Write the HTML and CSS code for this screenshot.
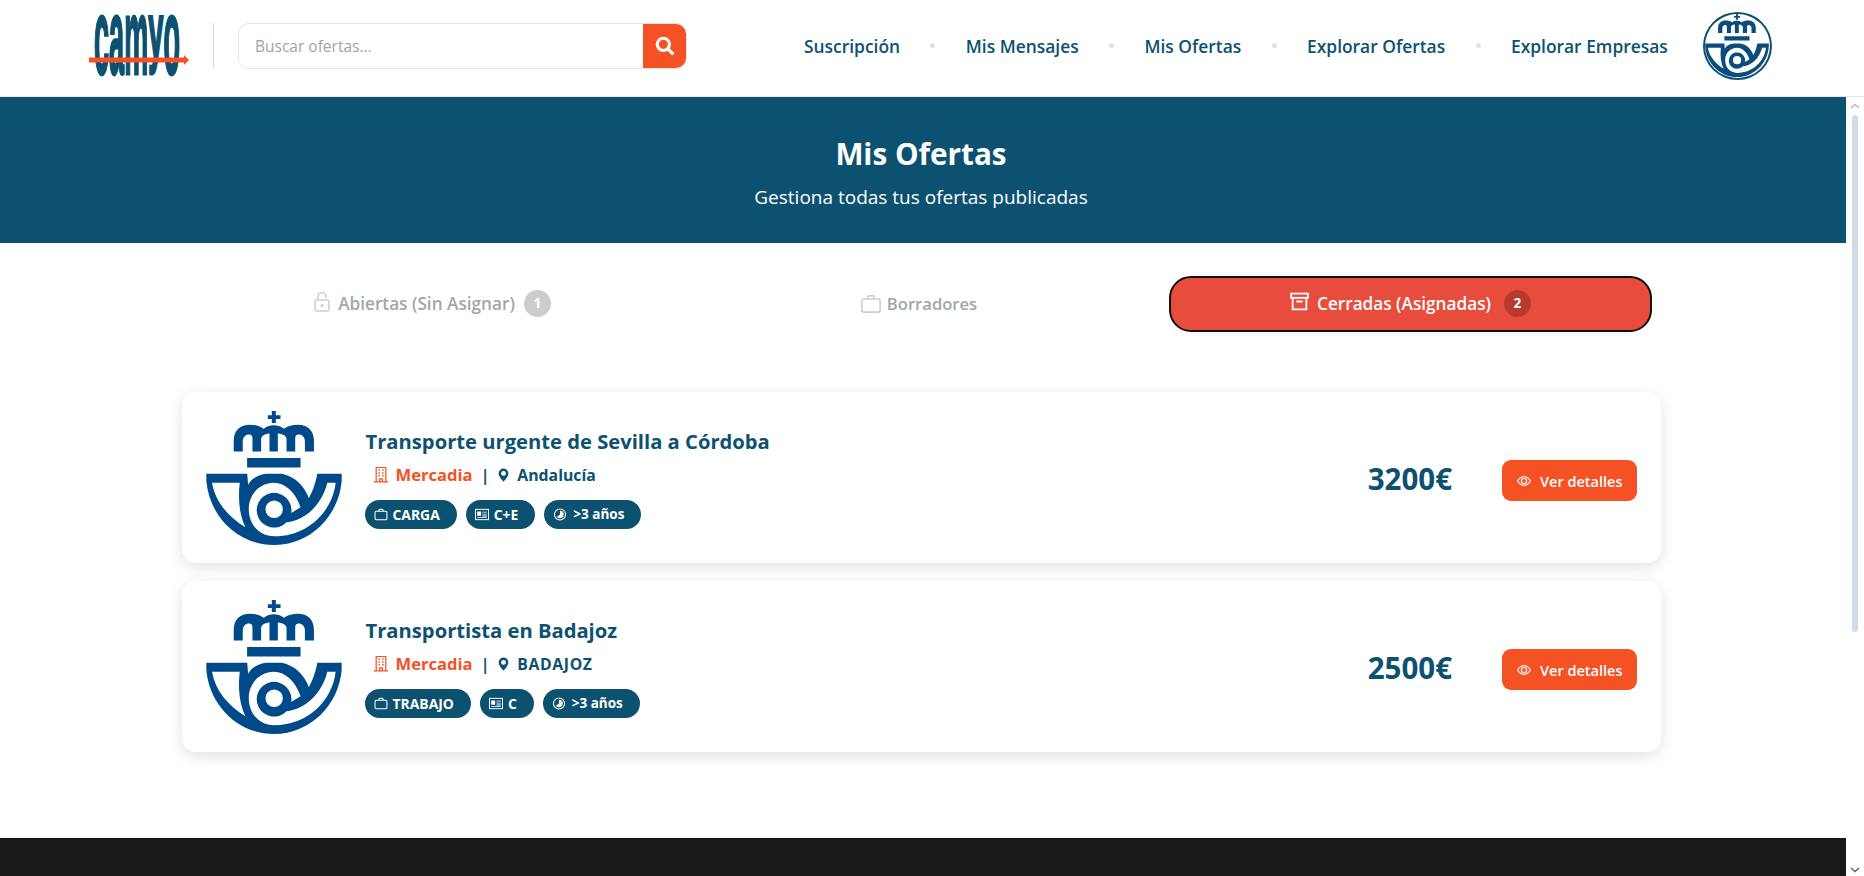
FILE: index.html
```html
<!DOCTYPE html>
<html lang="es">
<head>
    <meta charset="UTF-8">
    <meta name="viewport" content="width=device-width, initial-scale=1.0">
    <title>Mis Ofertas - Camyo</title>
    <link rel="stylesheet" href="styles.css">
</head>
<body>
    <!-- Icon sprite -->
    <svg class="sprite" xmlns="http://www.w3.org/2000/svg">
        <symbol id="logo-correos" viewBox="18 17 405 401">
            <path d="M214 17h12v13h14v11h-14v12h-12V41h-12V30h12z"/>
            <path d="M100 138V105C100 75 120 58 148 58C165 58 178 62 190 70C200 63 210 60 220 60C230 60 240 63 250 70C262 62 275 58 292 58C320 58 340 75 340 105V138z"/>
            <path class="cut" d="M127 140V108C127 95 135 87 146 87C152 87 156 90 156 98V140zM182 140V102C182 92 190 86 207 84V140zM232 140V84C250 86 258 92 258 102V140zM284 140V98C284 90 288 87 294 87C305 87 313 95 313 108V140z"/>
            <path d="M140 158h160v28H140z"/>
            <path d="M18 205H423V225C415 330 330 418 220 418C110 418 26 330 18 225z"/>
            <path class="cut" d="M35 232H118C112 285 118 330 135 365C85 335 45 290 35 232z"/>
            <path class="cut" d="M140 200H195V205C170 210 152 220 143 238z"/>
            <path class="cut" d="M245 200H350V205C345 235 335 258 325 278C310 240 285 215 245 205z"/>
            <path class="cut" d="M405 232C395 320 320 392 222 392C175 392 145 355 145 310C145 265 180 232 220 232C255 232 285 262 300 305L272 322A52 52 0 1 0 258 350C315 345 365 295 380 232z"/>
            <circle class="cut" cx="221" cy="311" r="26"/>
        </symbol>
        <symbol id="ic-lock" viewBox="0 0 16 20">
            <rect x="1" y="8" width="14" height="11" rx="1.5" fill="none" stroke="currentColor" stroke-width="1.6"/>
            <path d="M4 8V4.5a4 4 0 0 1 8 0V6" fill="none" stroke="currentColor" stroke-width="1.6"/>
            <circle cx="8" cy="13.5" r="1.5"/>
        </symbol>
        <symbol id="ic-case" viewBox="0 0 16 16">
            <path d="M5.5 4V2.500a1 1 0 0 1 1-1h3a1 1 0 0 1 1 1V4" fill="none" stroke="currentColor" stroke-width="1.3"/>
            <rect x=".7" y="4" width="14.600" height="10.500" rx="1.300" fill="none" stroke="currentColor" stroke-width="1.3"/>
        </symbol>
        <symbol id="ic-archive" viewBox="0 0 18 18">
            <rect x="1" y="1.500" width="16" height="4" fill="none" stroke="currentColor" stroke-width="1.7"/>
            <path d="M2.500 5.500V16.500h13V5.500M6 9h6" fill="none" stroke="currentColor" stroke-width="1.7"/>
        </symbol>
        <symbol id="ic-building" viewBox="0 0 16 18">
            <path d="M2.500 17V1h11v16M0 17.300h16M6.500 17v-3h3v3" fill="none" stroke="currentColor" stroke-width="1.4"/>
            <path d="M5 3h1.700v1.700H5zM9.300 3H11v1.700H9.300zM5 6.300h1.700V8H5zM9.300 6.300H11V8H9.300zM5 9.600h1.700v1.700H5zM9.300 9.600H11v1.700H9.300z"/>
        </symbol>
        <symbol id="ic-pin" viewBox="0 0 16 16">
            <path d="M8 16s6-5.686 6-10A6 6 0 0 0 2 6c0 4.314 6 10 6 10m0-7a3 3 0 1 1 0-6 3 3 0 0 1 0 6"/>
        </symbol>
        <symbol id="ic-card" viewBox="0 0 16 13">
            <rect x=".6" y=".6" width="14.800" height="11.800" fill="none" stroke="currentColor" stroke-width="1.1"/>
            <path d="M2.500 3h4.500v5H2.500zM8.500 3.300h5v1h-5zM8.500 5.500h5v1h-5zM8.500 7.700h5v1h-5zM2.500 9.600h11v1h-11z"/>
        </symbol>
        <symbol id="ic-clock" viewBox="0 0 16 16">
            <circle cx="8" cy="8" r="6.800" fill="none" stroke="currentColor" stroke-width="1.3"/>
            <path d="M8 3.500V8L4.300 10.800A4.600 4.600 0 0 0 12.600 8 4.600 4.600 0 0 0 8 3.500z"/>
        </symbol>
        <symbol id="ic-eye" viewBox="0 0 16 16">
            <path d="M16 8s-3-5.500-8-5.500S0 8 0 8s3 5.500 8 5.500S16 8 16 8M1.173 8a13 13 0 0 1 1.660-2.043C4.120 4.668 5.880 3.500 8 3.500s3.879 1.168 5.168 2.457A13 13 0 0 1 14.828 8q-.086.130-.195.288c-.335.480-.830 1.120-1.465 1.755C11.879 11.332 10.119 12.500 8 12.500s-3.879-1.168-5.168-2.457A13 13 0 0 1 1.172 8z"/>
            <path d="M8 5.500a2.500 2.500 0 1 0 0 5 2.500 2.500 0 0 0 0-5M4.500 8a3.500 3.500 0 1 1 7 0 3.500 3.500 0 0 1-7 0"/>
        </symbol>
    </svg>

    <header class="navbar">
        <svg class="brand" viewBox="0 0 100 57" aria-label="camyo">
            <text class="brand-text" x="5" y="14.400" transform="scale(1 3.960)" textLength="54.300" lengthAdjust="spacingAndGlyphs">cam</text>
            <text class="brand-text" x="59.300" y="14.400" transform="scale(1 2.860)" textLength="15.100" lengthAdjust="spacingAndGlyphs">y</text>
            <text class="brand-text" x="74.400" y="14.400" transform="scale(1 3.960)" textLength="16.600" lengthAdjust="spacingAndGlyphs">o</text>
            <path class="brand-arrow" d="M0 40.500h95V38l5 5-5 5v-2.500H0z"/>
        </svg>
        <div class="brand-divider"></div>
        <form class="search">
            <input class="search-input" type="text" placeholder="Buscar ofertas...">
            <button class="search-btn" type="button">
                <svg width="20" height="20" viewBox="0 0 18 18"><circle cx="7.500" cy="7.500" r="5.500" fill="none" stroke="currentColor" stroke-width="2.800"/><path d="M11.500 11.500l5 5" stroke="currentColor" stroke-width="3"/></svg>
            </button>
        </form>
        <nav class="nav-links">
            <a href="#" class="nav-link">Suscripción</a>
            <span class="nav-dot"></span>
            <a href="#" class="nav-link">Mis Mensajes</a>
            <span class="nav-dot"></span>
            <a href="#" class="nav-link">Mis Ofertas</a>
            <span class="nav-dot"></span>
            <a href="#" class="nav-link">Explorar Ofertas</a>
            <span class="nav-dot"></span>
            <a href="#" class="nav-link">Explorar Empresas</a>
        </nav>
        <div class="avatar">
            <svg class="avatar-logo"><use href="#logo-correos"/></svg>
        </div>
    </header>

    <div class="page">
        <main class="content">
            <section class="banner">
                <h1>Mis Ofertas</h1>
                <p>Gestiona todas tus ofertas publicadas</p>
            </section>

            <div class="tabs">
                <a href="#" class="tab">
                    <svg class="tab-icon lock"><use href="#ic-lock"/></svg>
                    <span>Abiertas (Sin Asignar)</span>
                    <span class="tab-badge">1</span>
                </a>
                <a href="#" class="tab tab-plain">
                    <svg class="tab-icon case"><use href="#ic-case"/></svg>
                    <span>Borradores</span>
                </a>
                <a href="#" class="tab tab-active">
                    <svg class="tab-icon archive"><use href="#ic-archive"/></svg>
                    <span>Cerradas (Asignadas)</span>
                    <span class="tab-badge">2</span>
                </a>
            </div>

            <div class="offers">
                <article class="offer">
                    <svg class="offer-logo"><use href="#logo-correos"/></svg>
                    <div class="offer-info">
                        <h3 class="offer-title">Transporte urgente de Sevilla a Córdoba</h3>
                        <div class="offer-meta">
                            <svg class="meta-building"><use href="#ic-building"/></svg>
                            <span class="company">Mercadia</span>
                            <span class="sep">|</span>
                            <svg class="meta-pin"><use href="#ic-pin"/></svg>
                            <span>Andalucía</span>
                        </div>
                        <div class="offer-tags">
                            <span class="tag"><svg class="tag-icon"><use href="#ic-case"/></svg>CARGA</span>
                            <span class="tag"><svg class="tag-icon"><use href="#ic-card"/></svg>C+E</span>
                            <span class="tag tag-years"><svg class="tag-icon"><use href="#ic-clock"/></svg>&gt;3 años</span>
                        </div>
                    </div>
                    <div class="offer-price">3200€</div>
                    <a href="#" class="btn-details"><svg class="btn-icon"><use href="#ic-eye"/></svg>Ver detalles</a>
                </article>

                <article class="offer">
                    <svg class="offer-logo"><use href="#logo-correos"/></svg>
                    <div class="offer-info">
                        <h3 class="offer-title">Transportista en Badajoz</h3>
                        <div class="offer-meta">
                            <svg class="meta-building"><use href="#ic-building"/></svg>
                            <span class="company">Mercadia</span>
                            <span class="sep">|</span>
                            <svg class="meta-pin"><use href="#ic-pin"/></svg>
                            <span class="place-caps">BADAJOZ</span>
                        </div>
                        <div class="offer-tags">
                            <span class="tag"><svg class="tag-icon"><use href="#ic-case"/></svg>TRABAJO</span>
                            <span class="tag"><svg class="tag-icon"><use href="#ic-card"/></svg>C</span>
                            <span class="tag tag-years"><svg class="tag-icon"><use href="#ic-clock"/></svg>&gt;3 años</span>
                        </div>
                    </div>
                    <div class="offer-price">2500€</div>
                    <a href="#" class="btn-details"><svg class="btn-icon"><use href="#ic-eye"/></svg>Ver detalles</a>
                </article>
            </div>

            <footer class="footer"></footer>
        </main>

        <div class="scrollbar">
            <svg class="scroll-arrow" viewBox="0 0 10 6"><path d="M1 5l4-3.500L9 5" fill="none" stroke="currentColor" stroke-width="1.600"/></svg>
            <div class="scroll-thumb"></div>
            <svg class="scroll-arrow scroll-down" viewBox="0 0 10 6"><path d="M1 1l4 3.500L9 1" fill="none" stroke="currentColor" stroke-width="1.600"/></svg>
        </div>
    </div>
</body>
</html>
```

FILE: styles.css
```css
* {
    margin: 0;
    padding: 0;
    box-sizing: border-box;
    font-family: 'Open Sans', 'Noto Sans', sans-serif;
}

:root {
    --navy: #0d5170;
    --orange: #f45225;
    --red: #e74c3c;
    --logo-blue: #004a8a;
}

html, body {
    height: 876px;
    overflow: hidden;
    background: white;
}

a {
    text-decoration: none;
}

.sprite {
    display: none;
}

.cut {
    fill: white;
}

/* Navbar */
.navbar {
    display: flex;
    align-items: center;
    height: 97px;
    padding: 0 0 5px 89px;
    border-bottom: 1px solid #e4e6e8;
}

.brand {
    width: 100px;
    height: 57px;
    overflow: visible;
}

.brand-text {
    font-family: 'Liberation Sans', sans-serif;
    font-weight: 700;
    font-size: 27px;
    fill: var(--navy);
    stroke: var(--navy);
    stroke-width: 2.2px;
    vector-effect: non-scaling-stroke;
}

.brand-arrow {
    fill: var(--orange);
}

.brand-divider {
    width: 1px;
    height: 45px;
    margin-left: 24px;
    background: #dcdcdc;
}

.search {
    display: flex;
    width: 449px;
    height: 46px;
    margin-left: 24px;
    border: 1px solid #e4e4e4;
    border-radius: 11px;
    overflow: hidden;
}

.search-input {
    flex: 1;
    min-width: 0;
    padding-left: 16px;
    border: none;
    outline: none;
    font-size: 15.5px;
}

.search-input::placeholder {
    color: #a3a3a3;
}

.search-btn {
    width: 43px;
    border: none;
    background: var(--orange);
    color: white;
    display: flex;
    align-items: center;
    justify-content: center;
}

.nav-links {
    display: flex;
    align-items: center;
    margin-left: 117px;
}

.nav-link {
    color: var(--navy);
    font-size: 17.4px;
    font-weight: 600;
    white-space: nowrap;
}

.nav-dot {
    width: 5px;
    height: 5px;
    margin: 0 30.4px;
    border-radius: 50%;
    background: #dfe3e6;
}

.avatar {
    width: 69px;
    height: 68px;
    margin-left: 35px;
    border: 2.5px solid var(--navy);
    border-radius: 50%;
    overflow: hidden;
    display: flex;
    align-items: center;
    justify-content: center;
}

.avatar-logo {
    width: 64px;
    height: 63px;
    color: #0a4c7f;
    fill: #0a4c7f;
}

/* Page body + scrollbar */
.page {
    display: flex;
    height: 779px;
}

.content {
    flex: 1;
    min-width: 0;
    overflow: hidden;
}

.scrollbar {
    width: 18px;
    display: flex;
    flex-direction: column;
    align-items: center;
    background: white;
    color: #b5b9bd;
}

.scroll-arrow {
    width: 10px;
    height: 6px;
    margin-top: 6px;
    flex-shrink: 0;
}

.scroll-thumb {
    width: 6px;
    height: 517px;
    margin-top: 6px;
    border-radius: 3px;
    background: #cfdbe6;
}

.scroll-down {
    margin-top: auto;
    margin-bottom: 3px;
    color: #666;
}

/* Banner */
.banner {
    height: 146px;
    padding: 35px 4px 0 0;
    background: var(--navy);
    color: white;
    text-align: center;
}

.banner h1 {
    font-size: 29.7px;
    font-weight: 700;
    line-height: 44px;
}

.banner p {
    margin-top: 7px;
    font-size: 19px;
    line-height: 28px;
}

/* Tabs */
.tabs {
    display: grid;
    grid-template-columns: 483px 490px 488px;
    height: 56px;
    margin: 33px 0 0 191px;
}

.tab {
    display: flex;
    align-items: center;
    justify-content: center;
    padding-bottom: 2px;
    color: #a3a6a8;
    font-size: 17.2px;
    font-weight: 600;
}

.tab-plain {
    padding-top: 1px;
    font-size: 16.6px;
}

.tab-icon {
    margin-right: 8px;
    color: #cdcfcf;
    fill: #cdcfcf;
}

.lock {
    width: 16px;
    height: 20px;
    margin-top: -2px;
}

.case {
    width: 20px;
    height: 20px;
    margin-right: 6px;
}

.archive {
    width: 19px;
    height: 19px;
    margin-top: -3px;
}

.tab-badge {
    width: 27px;
    height: 27px;
    margin-left: 9px;
    border-radius: 50%;
    background: #cdcdcd;
    color: white;
    font-size: 13.5px;
    font-weight: 700;
    display: flex;
    align-items: center;
    justify-content: center;
}

.tab-active {
    margin-left: 5px;
    border: 2px solid #111;
    border-radius: 22px;
    background: var(--red);
    color: white;
}

.tab-active .tab-icon {
    color: white;
    fill: white;
}

.tab-active .tab-badge {
    margin-left: 13px;
    background: #b83a2e;
}

/* Offer cards */
.offers {
    display: flex;
    flex-direction: column;
    gap: 18px;
    width: 1479.5px;
    margin: 60px 0 0 181.5px;
}

.offer {
    display: flex;
    align-items: center;
    height: 171px;
    padding: 0 24px;
    border-radius: 14px;
    background: white;
    box-shadow: 0 4px 15px rgba(0,0,0,0.12);
}

.offer-logo {
    width: 136px;
    height: 134px;
    color: var(--logo-blue);
    fill: var(--logo-blue);
    flex-shrink: 0;
}

.offer-info {
    flex: 1;
    margin-left: 24px;
}

.offer-title {
    color: var(--navy);
    font-size: 20.2px;
    font-weight: 700;
    line-height: 28px;
}

.offer-meta {
    display: flex;
    align-items: center;
    margin: 8px 0 0 8px;
    height: 24px;
    color: var(--navy);
    font-size: 15.8px;
    font-weight: 700;
}

.place-caps {
    letter-spacing: 0.6px;
}

.meta-building {
    width: 14px;
    height: 17px;
    margin-right: 7px;
    color: var(--orange);
    fill: var(--orange);
}

.company {
    margin-left: 1px;
    color: var(--orange);
    font-size: 16.6px;
}

.sep {
    margin: 0 8px;
}

.meta-pin {
    width: 13px;
    height: 14px;
    margin-right: 7px;
    fill: var(--navy);
}

.offer-tags {
    display: flex;
    gap: 9px;
    margin: 13px 0 0 -1px;
}

.tag {
    display: flex;
    align-items: center;
    height: 29px;
    padding: 0 17px 0 9px;
    border-radius: 15px;
    background: var(--navy);
    color: white;
    font-size: 13.9px;
    font-weight: 700;
    white-space: nowrap;
}

.tag-icon {
    width: 14px;
    height: 13px;
    margin-right: 5px;
    color: white;
    fill: white;
}

.tag-years {
    font-size: 13.5px;
}

.tag-years .tag-icon {
    margin-right: 6px;
}

.offer-price {
    margin: 2px 50px 0 0;
    color: var(--navy);
    font-size: 29.5px;
    font-weight: 700;
}

.btn-details {
    display: flex;
    align-items: center;
    width: 135px;
    height: 41px;
    margin-top: 6px;
    padding: 1px 0 0 15px;
    border-radius: 9px;
    background: var(--orange);
    color: white;
    font-size: 14.5px;
    font-weight: 600;
    white-space: nowrap;
}

.btn-icon {
    width: 14px;
    height: 14px;
    margin-right: 9px;
    fill: white;
    stroke: white;
    stroke-width: 0.4px;
}

/* Footer */
.footer {
    height: 80px;
    margin-top: 86px;
    background: #181818;
}
```
